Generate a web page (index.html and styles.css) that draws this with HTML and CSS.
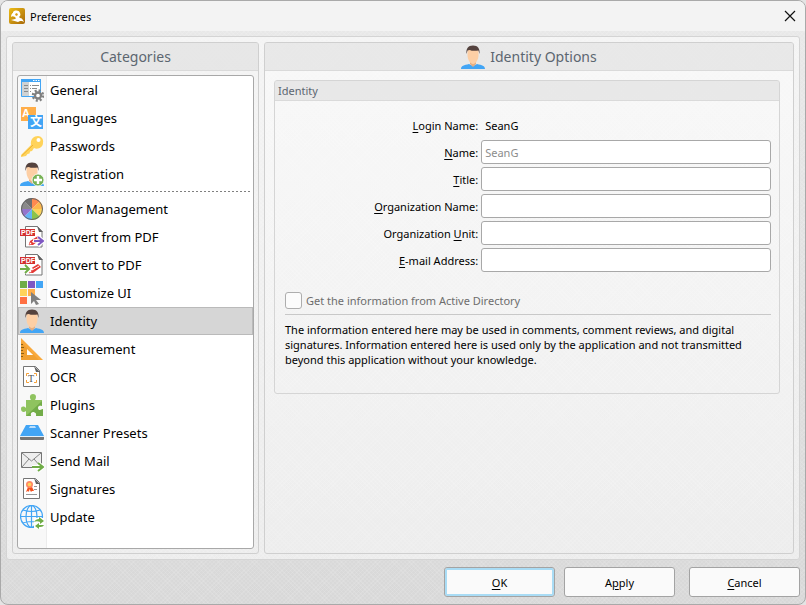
FILE: index.html
```
<!DOCTYPE html>
<html lang="en">
<head>
<meta charset="UTF-8">
<meta name="viewport" content="width=device-width, initial-scale=1">
<title>Preferences</title>
<link rel="stylesheet" href="styles.css">
</head>
<body>
<svg class="defs" aria-hidden="true">
  <defs>
    <linearGradient id="gold" x1="0" y1="0" x2="1" y2="1"><stop offset="0" stop-color="#edbd16"/><stop offset="1" stop-color="#a8690a"/></linearGradient>
  </defs>
  <symbol id="i-person" viewBox="0 0 24 24">
    <path d="M0 24c0-3 3-4 8-5l4 2 4-2c5 1 8 2 8 5z" fill="#42a5f5"/>
    <path d="M9 15h6v4l-3 3-3-3z" fill="#e5ae82"/>
    <path d="M6.500 5h11v5c0 5-3 9-5.500 9s-5.500-4-5.500-9z" fill="#fdcfa5"/>
    <path d="M5.500 9C5 3.500 7 .5 12 .5c5 0 7 3 6.500 8.500l-1-3.500c-3 .5-7 .5-9-.5l-2 .5z" fill="#54423e"/>
  </symbol>
  <symbol id="i-pdf" viewBox="0 0 24 24">
    <path d="M5.500 1.500h12l4.500 5v15.500H5.500z" fill="#fff" stroke="#757575"/>
    <path d="M17 1l6 6h-4z" fill="#616161"/>
    <path d="M9 20l1-4 8-5 3 3-8 6z" fill="#e53935"/>
    <path d="M12 17l7-4" stroke="#fff"/>
    <path d="M9 20l1-3 2 2z" fill="#fff" stroke="#e53935" stroke-width=".5"/>
    <path d="M0 4h15v7H0z" fill="#d32f2f"/>
  </symbol>
</svg>

<div class="window">
  <header class="titlebar">
    <svg class="app-icon" viewBox="0 0 16 16">
      <rect width="16" height="16" rx="2" fill="url(#gold)"/>
      <path d="M4 4c2-2 6-2 7 1 1 2 0 3-1 4l1 1c2 0 3 2 4 4l-2-1-2 0-2 1-7-2 4-1c1 0 1-1 0-2-2-1-3-1-4 0 0-2 1-4 2-4z" fill="#fff"/>
      <path d="M7 5l2 1-1 2-2-1z" fill="#d99b10"/>
    </svg>
    <h1>Preferences</h1>
    <button class="close" type="button" aria-label="Close">
      <svg viewBox="0 0 12 12"><path d="M1 1l10 10M11 1L1 11" stroke="#111" stroke-width="1.200"/></svg>
    </button>
  </header>

  <main class="workspace">
    <section class="pane categories">
      <h2 class="pane-title">Categories</h2>
      <nav class="list">
        <a href="#general">
          <svg viewBox="0 0 24 24">
            <path d="M1.500 1.500h19v17h-19z" fill="#fff" stroke="#42a5f5"/>
            <path d="M1 1h20v3H1z" fill="#42a5f5"/><path d="M13 2.500h7" stroke="#fff" stroke-width="1" stroke-dasharray="1.500 1"/>
            <path d="M2 4h7v14H2z" fill="#cfd2d4"/>
            <path d="M4 7.500h4M4 10.500h4M4 13.500h4M10 7.500h1M12 7.500h7M10 10.500h1M12 10.500h5M10 13.500h1" stroke="#8b8b8b"/>
            <circle cx="18" cy="17.500" r="5" fill="none" stroke="#808080" stroke-width="2.500" stroke-dasharray="2 1.927"/>
            <circle cx="18" cy="17.500" r="3" fill="#fff" stroke="#808080" stroke-width="2.300"/>
          </svg>General</a>
        <a href="#languages">
          <svg viewBox="0 0 24 24">
            <path d="M1 1h15v14H1z" fill="#ffae4a"/>
            <text x="2" y="11" class="glyph-a">A</text>
            <path d="M8 9h15v14H8z" fill="#42a5f5"/>
            <text x="10" y="20" class="glyph-wen">文</text>
          </svg>Languages</a>
        <a href="#passwords">
          <svg viewBox="0 0 24 24">
            <path d="M1 21l10-10c-1-6 3-9 7-9 3 0 6 3 5 7 0 4-5 7-9 5l-2 3-2 .5-.5 2-2 .5L6 22l-5 1z" fill="#ffd35a"/>
            <path d="M2 21.500L13 11" stroke="#eeb234" stroke-width="1"/><circle cx="18.500" cy="6" r="2" fill="#fff"/>
          </svg>Passwords</a>
        <a href="#registration">
          <svg viewBox="0 0 24 24"><use href="#i-person"/><circle cx="18" cy="18" r="6" fill="#77b255" stroke="#fff" stroke-width=".8"/><path d="M18 14v8M14 18h8" stroke="#fff" stroke-width="2.400"/></svg>Registration</a>
        <hr>
        <a href="#color-management">
          <svg viewBox="0 0 24 24">
            <path d="M12 12V1a11 11 0 0 1 7.800 3.200z" fill="#ff8a50"/>
            <path d="M12 12l7.800-7.800A11 11 0 0 1 23 12z" fill="#ffb74d"/>
            <path d="M12 12h11a11 11 0 0 1-3.200 7.800z" fill="#fbd45b"/>
            <path d="M12 12l7.800 7.800A11 11 0 0 1 12 23z" fill="#8bc34a"/>
            <path d="M12 12v11a11 11 0 0 1-7.800-3.200z" fill="#64b5f6"/>
            <path d="M12 12l-7.800 7.800A11 11 0 0 1 1 12z" fill="#9575cd"/>
            <path d="M12 12H1a11 11 0 0 1 3.200-7.800z" fill="#8a8a8a"/>
            <path d="M12 12L4.200 4.200A11 11 0 0 1 12 1z" fill="#707070"/>
            <circle cx="12" cy="12" r="10.500" fill="none" stroke="#656565"/>
          </svg>Color Management</a>
        <a href="#convert-from-pdf">
          <svg viewBox="0 0 24 24"><use href="#i-pdf"/><text x="1" y="10" class="tag">PDF</text><path d="M13 16h10M18 11l5 5-5 5" fill="none" stroke="#fff" stroke-width="3.500"/><path d="M14 16h9M18 12l5 4-5 4" fill="none" stroke="#7e57c2" stroke-width="2"/></svg>Convert from PDF</a>
        <a href="#convert-to-pdf">
          <svg viewBox="0 0 24 24"><use href="#i-pdf"/><text x="1" y="10" class="tag">PDF</text><path d="M4 16h5M5 12l5 4-5 4" fill="none" stroke="#fff" stroke-width="4"/><path d="M0 16h9M5 12l4 4-4 4" fill="none" stroke="#70ad47" stroke-width="2"/></svg>Convert to PDF</a>
        <a href="#customize-ui">
          <svg viewBox="0 0 24 24">
            <path d="M0 0h7v7H0z" fill="#70ad47"/><path d="M8 0h7v7H8z" fill="#7e57c2"/><path d="M16 0h7v7h-7z" fill="#42a5f5"/>
            <path d="M0 8h7v7H0z" fill="#ffd35a"/><path d="M8 8h7v7H8z" fill="#ffae4a"/><path d="M0 16h7v7H0z" fill="#ff7043"/>
            <path d="M11 11l10 8h-5l3 4-3 1-2-4-3 3z" fill="#808080"/>
          </svg>Customize UI</a>
        <a href="#identity" class="selected" aria-current="page">
          <svg viewBox="0 0 24 24"><use href="#i-person"/></svg>Identity</a>
        <a href="#measurement">
          <svg viewBox="0 0 24 24">
            <path d="M1 1l22 22H1zM7 13v5h6z" fill="#f9a93c" fill-rule="evenodd"/>
            <path d="M1 5l18 18H1z" fill="#d98713" opacity=".25"/>
            <path d="M1 7.500h2M1 10.500h3M1 13.500h2M1 16.500h3M1 19.500h2" stroke="#90600f"/>
            <path d="M7 12v6h6z" fill="#fff"/>
          </svg>Measurement</a>
        <a href="#ocr">
          <svg viewBox="0 0 24 24">
            <path d="M3.500 1.500h12l4 4v16h-16z" fill="#fff" stroke="#757575"/><path d="M14 1l6 6h-4z" fill="#616161"/>
            <path d="M6.500 11V8.500H9M14 8.500h2.500V11M6.500 15v2.500H9M14 17.500h2.500V15" fill="none" stroke="#f5a13a"/>
            <text x="8" y="17" class="glyph-t">T</text>
          </svg>OCR</a>
        <a href="#plugins">
          <svg viewBox="0 0 24 24">
            <path d="M6 7h5c-2-3-1-6 2-6s4 3 2 6h7v6c-3-1-4 0-4 2s1 3 5 1v7h-7c1-3-1-4-3-4s-3 2-2 4H6v-5c-2 2-5 1-5-2s3-3 5-1z" fill="#8fc35f"/>
            <path d="M6 23L22 8v5c-3-1-4 0-4 2s1 3 5 1v7h-7c1-3-1-4-3-4s-3 2-2 4z" fill="#72ac48"/>
          </svg>Plugins</a>
        <a href="#scanner-presets">
          <svg viewBox="0 0 24 24"><path d="M6 4h12l6 11H0z" fill="#42a5f5"/><path d="M10 5h5l1 2H9z" fill="#bbdefb"/><path d="M0 15h24v1H0z" fill="#e4f1fb"/><path d="M0 16h24v2q0 1-1 1H1q-1 0-1-1z" fill="#757575"/></svg>Scanner Presets</a>
        <a href="#send-mail">
          <svg viewBox="0 0 24 24">
            <path d="M1.500 3.500h20v15h-20z" fill="#eee" stroke="#757575"/>
            <path d="M2 4l9.500 8L21 4M2 18l7-8M21 18l-7-8" fill="none" stroke="#858585"/>
            <path d="M12 18h10M18 14l5 4-5 4" fill="none" stroke="#fff" stroke-width="4"/><path d="M12 18h10M18 14l5 4-5 4" fill="none" stroke="#70ad47" stroke-width="2"/>
          </svg>Send Mail</a>
        <a href="#signatures">
          <svg viewBox="0 0 24 24">
            <path d="M3.500 1.500h12l4 4v16h-16z" fill="#fff" stroke="#757575"/><path d="M14 1l6 6h-4z" fill="#616161"/>
            <path d="M8 10l-2 5 2-1 1 1 .5-3 1.500 3 1-1 2 0-2-4z" fill="#f4511e"/><circle cx="9.500" cy="7.500" r="3.500" fill="#ff8a65"/><circle cx="9.500" cy="7.500" r="1.800" fill="#ffd35a"/>
            <path d="M14 9.500h3M14 12.500h3M6 17.500h11" stroke="#999"/>
          </svg>Signatures</a>
        <a href="#update">
          <svg viewBox="0 0 24 24">
            <g fill="none" stroke="#42a5f5" stroke-width="1.200"><circle cx="11.500" cy="11.500" r="11"/><ellipse cx="11.500" cy="11.500" rx="5.500" ry="11"/><path d="M11.500 0v23M0 11.500h23M3 5q8.500 3 17 0M3 18q8.500-3 17 0"/></g>
            <path d="M14 13h10v11H14z" fill="#fff"/>
            <path d="M14 17c1-2 3-3 5-3v-2l5 4-4 3v-2c-2-1-4-1-6 0zM24 20c-1 2-3 2-5 2v2l-4-3 4-3v2c2 0 4 0 5 0z" fill="#70ad47"/>
          </svg>Update</a>
      </nav>
    </section>

    <section class="pane options">
      <h2 class="pane-title"><svg viewBox="0 0 24 24"><use href="#i-person"/></svg>Identity Options</h2>
      <form class="group" id="identity-form">
        <h3 class="group-title">Identity</h3>
        <div class="group-body">
          <div class="fields">
            <label for="login"><u>L</u>ogin Name:</label>
            <output id="login">SeanG</output>
            <label for="name"><u>N</u>ame:</label>
            <input type="text" id="name" placeholder="SeanG">
            <label for="title"><u>T</u>itle:</label>
            <input type="text" id="title">
            <label for="org"><u>O</u>rganization Name:</label>
            <input type="text" id="org">
            <label for="unit">Organization <u>U</u>nit:</label>
            <input type="text" id="unit">
            <label for="email"><u>E</u>-mail Address:</label>
            <input type="text" id="email">
          </div>
          <label class="check"><input type="checkbox" disabled>Get the information from Active Directory</label>
          <p class="note">The information entered here may be used in comments, comment reviews, and digital signatures. Information entered here is used only by the application and not transmitted beyond this application without your knowledge.</p>
        </div>
      </form>
    </section>
  </main>

  <footer class="actions">
    <button class="default" type="submit" form="identity-form"><u>O</u>K</button>
    <button type="button">A<u>p</u>ply</button>
    <button class="cancel" type="button"><u>C</u>ancel</button>
  </footer>
</div>
</body>
</html>
```
FILE: styles.css
```
* {
  box-sizing: border-box;
}

body {
  margin: 0;
  background: #e4e4e4;
  color: #000;
  font-family: "Noto Sans", "Open Sans", sans-serif;
  font-size: 11px;
  line-height: 15px;
}

.defs {
  position: absolute;
  width: 0;
  height: 0;
}

h1, h2, h3, p {
  margin: 0;
  font-weight: normal;
}

button, input {
  font: inherit;
  color: inherit;
}

u {
  text-underline-offset: 2px;
}

.window {
  display: flex;
  flex-direction: column;
  min-height: 100vh;
  border: 1px solid #a9a9a9;
  border-radius: 8px;
  overflow: hidden;
  background:
    repeating-linear-gradient(45deg, rgba(255, 255, 255, 0.1) 0 1px, transparent 1px 3px),
    repeating-linear-gradient(-45deg, rgba(255, 255, 255, 0.1) 0 1px, transparent 1px 3px),
    linear-gradient(#e9e9e9, #d8d8d8);
}

/* title bar */

.titlebar {
  display: flex;
  align-items: center;
  height: 30px;
  padding: 0 9px 0 8px;
  background: #f3f3f3;
}

.titlebar h1 {
  flex: 1;
  font-size: 11px;
}

.app-icon {
  width: 16px;
  height: 16px;
  margin-right: 5px;
}

.close {
  display: flex;
  padding: 0;
  border: 0;
  background: none;
}

.close svg {
  width: 12px;
  height: 12px;
}

/* panes */

.workspace {
  flex: 1;
  display: flex;
  gap: 5px;
  margin: 5px 5px 0;
  padding: 5px;
  border: 1px solid #d4d4d4;
  border-radius: 3px;
  background: rgba(255, 255, 255, 0.5);
}

.pane {
  display: flex;
  flex-direction: column;
  border: 1px solid #cfcfcf;
  border-radius: 3px;
}

.categories {
  width: 247px;
}

.options {
  flex: 1;
  background: linear-gradient(rgba(255, 255, 255, 0.4), rgba(255, 255, 255, 0));
}

.pane-title {
  display: flex;
  align-items: center;
  justify-content: center;
  height: 28px;
  border-bottom: 1px solid #dadada;
  background: rgba(222, 222, 222, 0.6);
  color: #5c6670;
  font-size: 14px;
  line-height: 20px;
}

.pane-title svg {
  width: 24px;
  height: 24px;
  margin-right: 5px;
}

.list {
  flex: 1;
  margin: 4px;
  border: 1px solid #a8a8a8;
  border-radius: 3px;
  background: linear-gradient(90deg, #f8f8f8 28px, #ececec 28px 29px, #fff 29px);
}

.list a {
  display: flex;
  align-items: center;
  gap: 6px;
  height: 28px;
  padding-left: 2px;
  color: #000;
  font-size: 13px;
  text-decoration: none;
}

.list a svg {
  width: 24px;
  height: 24px;
}

.list .selected {
  background: #d6d6d6;
  box-shadow: inset 0 0 0 1px #bababa;
}

.list hr {
  height: 1px;
  margin: 3px 2px;
  border: 0;
  background: repeating-linear-gradient(90deg, #808080 0 2px, transparent 2px 4px);
}

.tag {
  font: bold 7px "Liberation Sans", sans-serif;
  fill: #fff;
}

.glyph-a {
  font: bold 11px "Liberation Sans", sans-serif;
  fill: #fff;
}

.glyph-wen {
  font: bold 12px "Noto Sans CJK SC", sans-serif;
  fill: #fff;
}

.glyph-t {
  font: 10px "Liberation Serif", serif;
  fill: #555;
}

/* identity group */

.group {
  margin: 9px 13px 0 9px;
  border: 1px solid #d5d5d5;
  border-radius: 3px;
}

.group-title {
  height: 20px;
  padding: 2px 3px;
  border-bottom: 1px solid #dadada;
  background: rgba(222, 222, 222, 0.6);
  color: #5c6670;
  font-size: 11px;
}

.group-body {
  padding: 12px 8px 26px 10px;
}

.fields {
  display: grid;
  grid-template-columns: 2fr 3fr;
  grid-auto-rows: 24px;
  gap: 3px;
  align-items: center;
}

.fields label {
  text-align: right;
}

.fields output {
  padding-left: 4px;
}

.fields input {
  width: 100%;
  height: 24px;
  padding: 0 3px;
  border: 1px solid #a8a8a8;
  border-radius: 3px;
  background: #fff;
}

.fields input::placeholder {
  color: #8c8c8c;
  opacity: 1;
}

.check {
  display: flex;
  align-items: center;
  gap: 4px;
  margin-top: 20px;
  padding-bottom: 5px;
  border-bottom: 1px solid #c8c8c8;
  color: #6d6d6d;
}

.check input {
  appearance: none;
  width: 17px;
  height: 17px;
  margin: 0;
  border: 1px solid #adadad;
  border-radius: 3px;
  background: #fbfbfb;
}

.note {
  padding-top: 7px;
}

/* footer buttons */

.actions {
  display: flex;
  justify-content: flex-end;
  gap: 9px;
  padding: 7px 5px;
}

.actions button {
  width: 111px;
  height: 30px;
  padding: 0;
  border: 1px solid #a3a3a3;
  border-radius: 3px;
  background: #fafafa;
}

.actions .default {
  box-shadow: inset 0 0 0 2px #a9dcf5;
}

.actions .cancel {
  margin-left: 5px;
}
```
